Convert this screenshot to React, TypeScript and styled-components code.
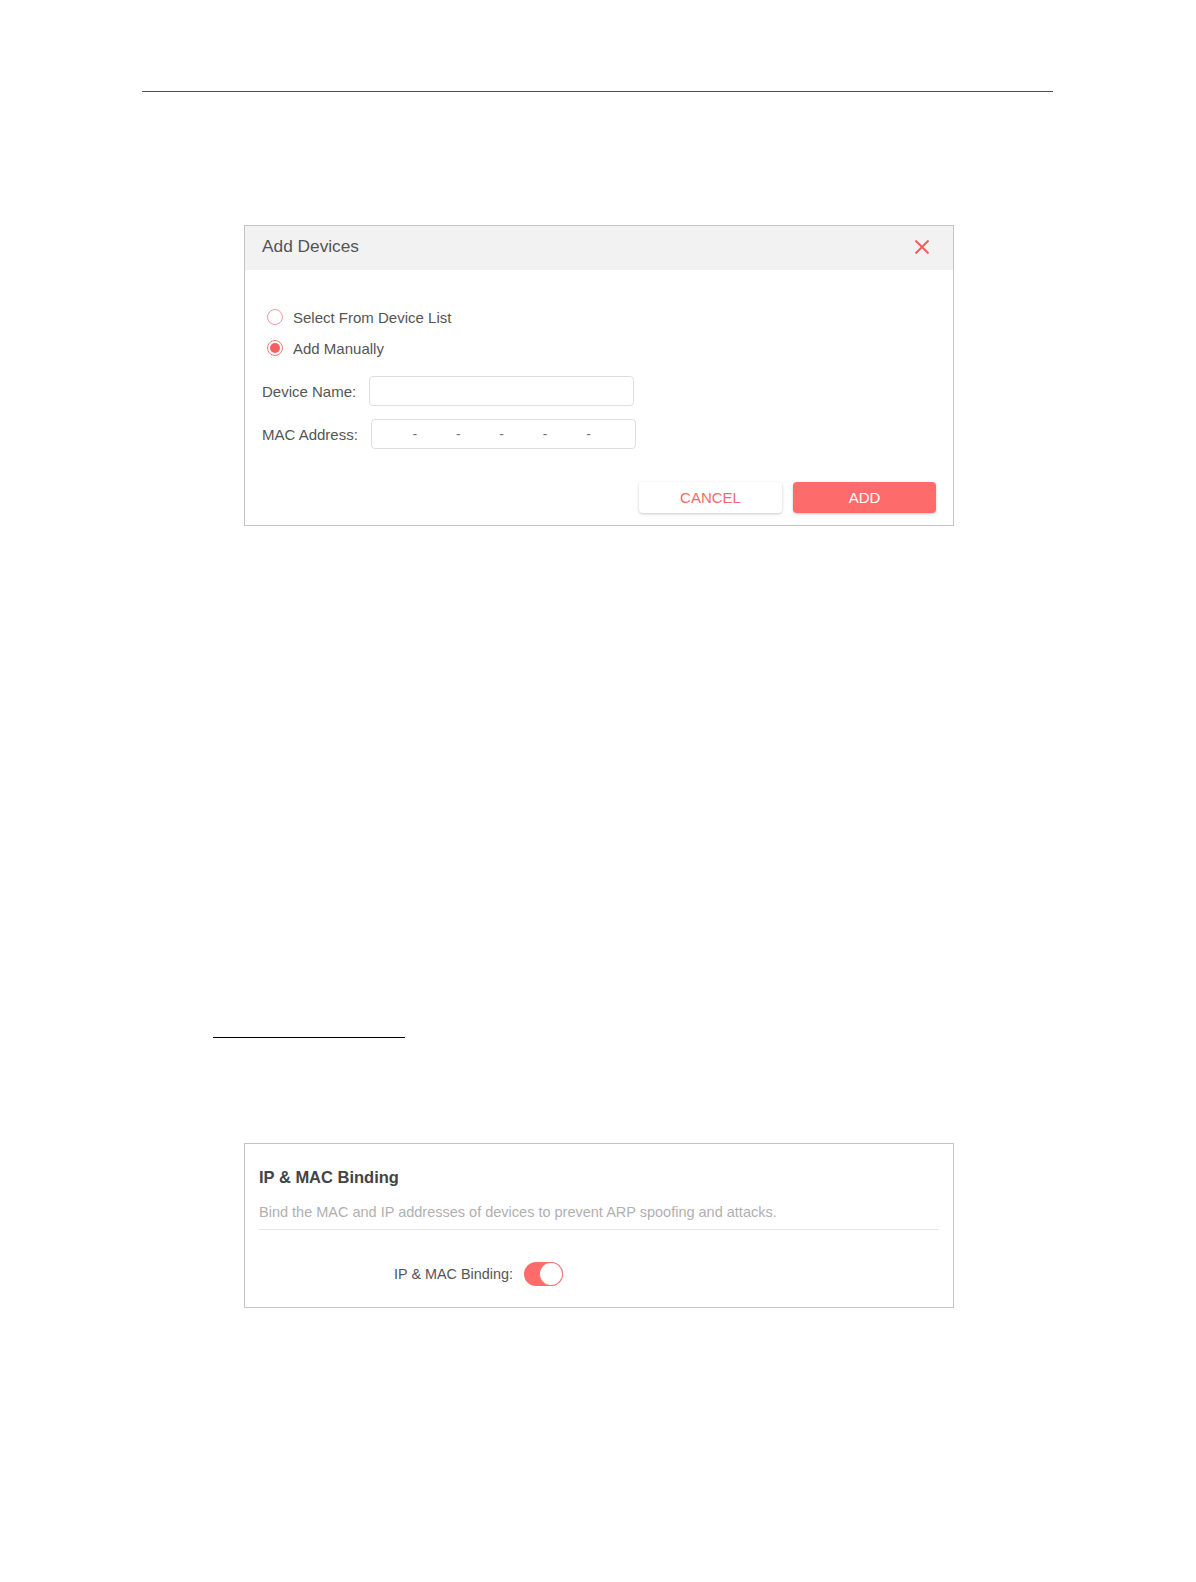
import React from "react";
import styled, { createGlobalStyle } from "styled-components";

const GlobalStyle = createGlobalStyle`
  html, body { margin: 0; padding: 0; background: #ffffff; }
  body { font-family: "Liberation Sans", Arial, sans-serif; }
  * { box-sizing: border-box; }
`;

const CORAL = "#fd6b6b";

const Page = styled.div`
  width: 1196px;
  min-height: 1582px;
  display: flex;
  flex-direction: column;
  align-items: flex-start;
`;

const Rule = styled.div<{ $top: number; $left: number; $width: number; $color: string }>`
  margin-top: ${(p) => p.$top}px;
  margin-left: ${(p) => p.$left}px;
  width: ${(p) => p.$width}px;
  height: 1px;
  background: ${(p) => p.$color};
`;

const Panel = styled.div<{ $top: number }>`
  margin-top: ${(p) => p.$top}px;
  margin-left: 244px;
  width: 710px;
  border: 1px solid #c4c4c4;
  background: #fff;
`;

const DialogHeader = styled.div`
  height: 44px;
  background: #f2f2f2;
  display: flex;
  align-items: center;
  justify-content: space-between;
  padding: 0 23px 3px 17px;
`;

const DialogTitle = styled.div`
  font-size: 17.3px;
  color: #555;
`;

const CloseButton = styled.button`
  width: 16px;
  height: 16px;
  padding: 0;
  border: none;
  background: transparent;
  display: flex;
  align-items: center;
  justify-content: center;
  cursor: pointer;
`;

const DialogBody = styled.div`
  padding: 37px 17px 12px 17px;
  display: flex;
  flex-direction: column;
`;

const RadioRow = styled.label`
  display: flex;
  align-items: center;
  height: 20px;
  margin-left: 5px;
  margin-bottom: 11px;
  font-size: 15px;
  color: #555;
  cursor: pointer;
`;

const RadioCircle = styled.span<{ $checked?: boolean }>`
  width: 16px;
  height: 16px;
  border-radius: 50%;
  border: 1px solid ${(p) => (p.$checked ? "#f47a7a" : "#f29a9a")};
  margin-right: 10px;
  display: flex;
  align-items: center;
  justify-content: center;
  flex-shrink: 0;
`;

const RadioDot = styled.span`
  width: 10px;
  height: 10px;
  border-radius: 50%;
  background: #f65f5f;
`;

const FieldRow = styled.div<{ $top: number }>`
  display: flex;
  align-items: center;
  margin-top: ${(p) => p.$top}px;
`;

const FieldLabel = styled.span`
  font-size: 15px;
  color: #555;
  margin-right: 13px;
  white-space: nowrap;
`;

const TextInput = styled.input`
  width: 265px;
  height: 30px;
  border: 1px solid #dedede;
  border-radius: 4px;
  outline: none;
  padding: 0 8px;
  font-family: inherit;
  font-size: 14px;
`;

const MacBox = styled.div`
  width: 265px;
  height: 30px;
  border: 1px solid #dedede;
  border-radius: 4px;
  display: flex;
  align-items: center;
  padding: 0 6px 0 2.6px;
`;

const MacSegment = styled.input`
  flex: 1;
  min-width: 0;
  height: 100%;
  border: none;
  outline: none;
  background: transparent;
  text-align: center;
  font-family: inherit;
  font-size: 14px;
`;

const MacDash = styled.span`
  width: 6px;
  text-align: center;
  font-size: 14px;
  color: #777;
  flex-shrink: 0;
`;

const Actions = styled.div`
  display: flex;
  justify-content: flex-end;
  gap: 11px;
  margin-top: 33px;
`;

const ActionButton = styled.button<{ $primary?: boolean }>`
  width: 143px;
  height: 31px;
  border: none;
  border-radius: 4px;
  font-family: inherit;
  font-size: 15px;
  cursor: pointer;
  background: ${(p) => (p.$primary ? CORAL : "#fff")};
  color: ${(p) => (p.$primary ? "#fff" : "#f06b6b")};
  box-shadow: 0 1px 3px rgba(0, 0, 0, 0.22);
`;

const CardInner = styled.div`
  padding: 23px 14px 21px 14px;
  display: flex;
  flex-direction: column;
`;

const CardTitle = styled.div`
  font-size: 16.5px;
  font-weight: bold;
  line-height: 20px;
  color: #444;
`;

const CardDesc = styled.div`
  margin-top: 16px;
  font-size: 14.5px;
  line-height: 18px;
  color: #b0b0b0;
`;

const Divider = styled.div`
  margin-top: 8px;
  height: 1px;
  background: #e6e6e6;
`;

const ToggleRow = styled.div`
  margin-top: 32px;
  display: flex;
  align-items: center;
  height: 24px;
`;

const ToggleLabel = styled.span`
  width: 254px;
  text-align: right;
  font-size: 14.4px;
  color: #555;
  margin-right: 11px;
`;

const Toggle = styled.span`
  position: relative;
  width: 39px;
  height: 24px;
  border-radius: 12px;
  background: ${CORAL};
  display: inline-block;
`;

const Knob = styled.span`
  position: absolute;
  top: 1px;
  right: 1px;
  width: 22px;
  height: 22px;
  border-radius: 50%;
  background: #fff;
  box-shadow: 0 0 0 1px #f27c7c;
`;

export default function App() {
  return (
    <>
      <GlobalStyle />
      <Page>
        <Rule $top={91} $left={142} $width={911} $color="#505050" />
        <Panel $top={133}>
          <DialogHeader>
            <DialogTitle>Add Devices</DialogTitle>
            <CloseButton aria-label="close">
              <svg width="16" height="16" viewBox="0 0 16 16">
                <path d="M1.5 1.5 L14.5 14.5 M14.5 1.5 L1.5 14.5" stroke="#f45c5c" strokeWidth="1.9" strokeLinecap="butt" />
              </svg>
            </CloseButton>
          </DialogHeader>
          <DialogBody>
            <RadioRow>
              <RadioCircle />
              Select From Device List
            </RadioRow>
            <RadioRow>
              <RadioCircle $checked>
                <RadioDot />
              </RadioCircle>
              Add Manually
            </RadioRow>
            <FieldRow $top={7}>
              <FieldLabel>Device Name:</FieldLabel>
              <TextInput />
            </FieldRow>
            <FieldRow $top={13}>
              <FieldLabel>MAC Address:</FieldLabel>
              <MacBox>
                <MacSegment />
                <MacDash>-</MacDash>
                <MacSegment />
                <MacDash>-</MacDash>
                <MacSegment />
                <MacDash>-</MacDash>
                <MacSegment />
                <MacDash>-</MacDash>
                <MacSegment />
                <MacDash>-</MacDash>
                <MacSegment />
              </MacBox>
            </FieldRow>
            <Actions>
              <ActionButton>CANCEL</ActionButton>
              <ActionButton $primary>ADD</ActionButton>
            </Actions>
          </DialogBody>
        </Panel>
        <Rule $top={511} $left={213} $width={192} $color="#000" />
        <Panel $top={105}>
          <CardInner>
            <CardTitle>IP &amp; MAC Binding</CardTitle>
            <CardDesc>Bind the MAC and IP addresses of devices to prevent ARP spoofing and attacks.</CardDesc>
            <Divider />
            <ToggleRow>
              <ToggleLabel>IP &amp; MAC Binding:</ToggleLabel>
              <Toggle>
                <Knob />
              </Toggle>
            </ToggleRow>
          </CardInner>
        </Panel>
      </Page>
    </>
  );
}
